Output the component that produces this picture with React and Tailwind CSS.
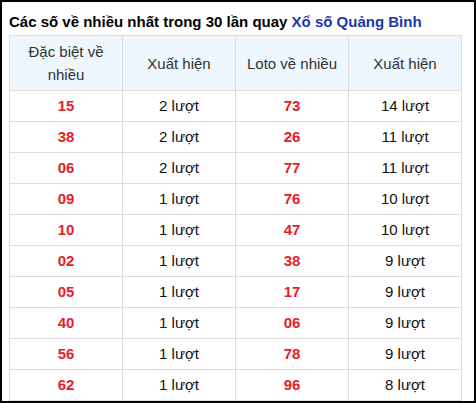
import React from "react";

const rows = [
  ["15", "2 lượt", "73", "14 lượt"],
  ["38", "2 lượt", "26", "11 lượt"],
  ["06", "2 lượt", "77", "11 lượt"],
  ["09", "1 lượt", "76", "10 lượt"],
  ["10", "1 lượt", "47", "10 lượt"],
  ["02", "1 lượt", "38", "9 lượt"],
  ["05", "1 lượt", "17", "9 lượt"],
  ["40", "1 lượt", "06", "9 lượt"],
  ["56", "1 lượt", "78", "9 lượt"],
  ["62", "1 lượt", "96", "8 lượt"],
];

const App = () => {
  return (
    <div
      className="w-[476px] h-[403px] border-2 border-black bg-white pl-[7px] pr-[12px] overflow-hidden"
      style={{ fontFamily: '"Liberation Sans", Arial, sans-serif' }}
    >
      {/* Title */}
      <h2 className="mt-[10px] h-[23px] text-[15px] leading-[20px] font-bold text-black whitespace-nowrap">
        Các số về nhiều nhất trong 30 lần quay{" "}
        <span className="text-[#1a36a9]">Xổ số Quảng Bình</span>
      </h2>

      {/* Table */}
      <table className="w-[453px] table-fixed border-collapse text-[15px] text-center">
        <thead>
          <tr className="bg-[#eef6fe] text-[#333333] h-[55px]">
            <th className="border border-[#dddddd] font-normal leading-[23px] px-2 py-1">Đặc biệt về nhiều</th>
            <th className="border border-[#dddddd] font-normal leading-[23px] px-2 py-1">Xuất hiện</th>
            <th className="border border-[#dddddd] font-normal leading-[23px] px-2 py-1">Loto về nhiều</th>
            <th className="border border-[#dddddd] font-normal leading-[23px] px-2 py-1">Xuất hiện</th>
          </tr>
        </thead>
        <tbody>
          {rows.map((r, i) => (
            <tr key={i} className="h-[31px]">
              <td className="border border-[#dddddd] font-bold text-[#e51d2a] leading-[20px]">{r[0]}</td>
              <td className="border border-[#dddddd] text-[#111111] leading-[20px]">{r[1]}</td>
              <td className="border border-[#dddddd] font-bold text-[#e51d2a] leading-[20px]">{r[2]}</td>
              <td className="border border-[#dddddd] text-[#111111] leading-[20px]">{r[3]}</td>
            </tr>
          ))}
        </tbody>
      </table>
    </div>
  );
};

export default App;
